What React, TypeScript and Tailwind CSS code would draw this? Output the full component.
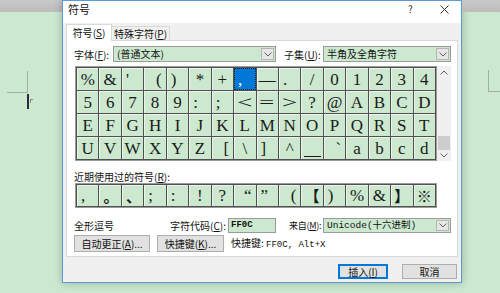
import { clsx } from "clsx";

type Glyph = {
  c: string;
  a?: "l" | "r";
  sel?: boolean;
  wide?: boolean;
  cjk?: boolean;
  under?: boolean;
};

const g = (c: string, opts: Partial<Glyph> = {}): Glyph => ({ c, ...opts });
const plain = (s: string) => [...s].map((c) => g(c));

const GRID: Glyph[][] = [
  [
    g("%"), g("&"), g("'", { a: "l" }), g("(", { a: "r" }), g(")", { a: "l" }), g("*"), g("+"),
    g(",", { a: "l", sel: true }), g("—"), g(".", { a: "l" }), g("/"), ...plain("01234"),
  ],
  [
    ...plain("56789"), g(":", { a: "l" }), g(";", { a: "l" }), g("<", { wide: true }), g("=", { wide: true }),
    g(">", { wide: true }), g("?"), g("@"), ...plain("ABCD"),
  ],
  plain("EFGHIJKLMNOPQRST"),
  [
    ...plain("UVWXYZ"), g("[", { a: "r" }), g("\\"), g("]", { a: "l" }), g("^"), g("_", { under: true }),
    g("`", { a: "r" }), ...plain("abcd"),
  ],
];

const RECENT: Glyph[] = [
  g(",", { a: "l" }), g("。", { a: "l", cjk: true }), g("、", { a: "l", cjk: true }), g(";", { a: "l" }),
  g(":", { a: "l" }), g("!"), g("?"), g("“", { a: "r" }), g("”", { a: "l" }), g("(", { a: "r" }),
  g("【", { cjk: true }), g(")", { a: "l" }), g("%"), g("&"), g("】", { cjk: true }), g("※", { cjk: true }),
];

function Cell({ glyph }: { glyph: Glyph }) {
  return (
    <div
      className={clsx(
        "flex items-center overflow-hidden leading-none",
        glyph.sel
          ? "bg-[#0078d7] text-white outline-1 -outline-offset-1 outline-dotted outline-[#222]"
          : "bg-[#cce8cf] text-[#1a1a1a] shadow-[inset_1px_1px_0_#e9f5ea]",
        glyph.a === "l" ? "justify-start pl-[4px]" : glyph.a === "r" ? "justify-end pr-[4px]" : "justify-center",
      )}
    >
      {glyph.under ? (
        <span className="mb-[2px] h-px w-[17px] self-end bg-[#1a1a1a]" />
      ) : (
        <span
          className={clsx(
            glyph.wide && "inline-block scale-x-[1.6]",
            glyph.cjk && "font-['Noto_Sans_CJK_SC',sans-serif] text-[15px] font-bold",
          )}
        >
          {glyph.c}
        </span>
      )}
    </div>
  );
}

function Chevron({ up = false }: { up?: boolean }) {
  return (
    <svg width="8" height="5" viewBox="0 0 8 5" className={clsx(up && "rotate-180")}>
      <path d="M0.5 0.5 L4 4 L7.5 0.5" fill="none" stroke="#606060" strokeWidth="1" />
    </svg>
  );
}

function Select({ text, width, mono = false }: { text: string; width: string; mono?: boolean }) {
  return (
    <div className={clsx("flex h-full shrink-0 items-stretch border border-[#9b9b9b] bg-[#cce8cf]", width)}>
      <span
        className={clsx(
          "flex flex-1 items-center pl-[3px] leading-none",
          mono ? "font-['Liberation_Mono','Noto_Sans_CJK_SC',monospace] text-[9.5px]" : "text-[10px]",
        )}
      >
        {text}
      </span>
      <span className="m-px flex w-[13px] items-center justify-center border border-[#b5b5b5] bg-[#e6e6e6]">
        <Chevron />
      </span>
    </div>
  );
}

function Acc({ t, k, tail = ":" }: { t: string; k: string; tail?: string }) {
  return (
    <span className="whitespace-nowrap leading-none">
      {t}(<span className="underline">{k}</span>){tail}
    </span>
  );
}

function Button({ children, width, primary = false }: { children: React.ReactNode; width: string; primary?: boolean }) {
  return (
    <div
      className={clsx(
        "flex h-full items-center justify-center bg-[#e1e1e1] text-[10px] leading-none",
        width,
        primary ? "border border-[#0078d7] shadow-[inset_0_0_0_1px_#0078d7]" : "border border-[#adadad]",
      )}
    >
      {children}
    </div>
  );
}

function Dialog() {
  return (
    <div className="flex h-[283px] w-[400px] shrink-0 flex-col border border-[#5b9bd5] bg-[#f0f0f0] shadow-[0_0_8px_rgba(0,0,0,0.25)]">
      <div className="flex h-[22px] items-start bg-white pt-[2px] text-[11px] leading-[12px]">
        <span className="flex-1 pl-[5px]">符号</span>
        <span className="mt-[1px] w-[6px] text-[10px] leading-[9px] text-[#333]">?</span>
        <svg width="9" height="9" viewBox="0 0 9 9" className="mt-[2px] mr-[12px] ml-[26px]">
          <path d="M0.5 0.5 L8.5 8.5 M8.5 0.5 L0.5 8.5" stroke="#333" strokeWidth="1" />
        </svg>
      </div>

      <div className="flex h-[17px] items-end pl-[3px] text-[10px]">
        <div className="relative z-10 -mb-px flex h-[17px] w-[46px] items-center justify-center border border-b-0 border-[#d9d9d9] bg-white">
          <Acc t="符号" k="S" tail="" />
        </div>
        <div className="flex h-[14px] w-[58px] items-center justify-center border border-b-0 border-l-0 border-[#d9d9d9] bg-[#f0f0f0]">
          <Acc t="特殊字符" k="P" tail="" />
        </div>
      </div>

      <div className="ml-[3px] flex h-[217px] w-[392px] flex-col border border-[#d9d9d9] bg-white pl-[7px] text-[10px]">
        <div className="mt-[5px] flex h-[16px] items-center">
          <span className="w-[39px]">
            <Acc t="字体" k="F" />
          </span>
          <Select text="(普通文本)" width="w-[163px]" />
          <span className="ml-[8px] w-[39px]">
            <Acc t="子集" k="U" />
          </span>
          <Select text="半角及全角字符" width="w-[128px]" />
        </div>

        <div className="mt-[4px] flex pl-px">
          <div className="border border-[#9a9a9a]">
            <div className="grid h-[93px] w-[360px] grid-cols-16 grid-rows-4 gap-px bg-[#505050] p-px font-['Liberation_Serif','DejaVu_Serif',serif] text-[17px]">
              {GRID.flat().map((glyph, i) => (
                <Cell key={i} glyph={glyph} />
              ))}
            </div>
          </div>
          <div className="flex h-[95px] w-[14px] flex-col items-center bg-[#f0f0f0]">
            <div className="flex h-[12px] items-center">
              <Chevron up />
            </div>
            <div className="flex-1" />
            <div className="h-[14px] w-[12px] bg-[#cdcdcd]" />
            <div className="flex h-[11px] items-center">
              <Chevron />
            </div>
          </div>
        </div>

        <div className="mt-[10px] flex h-[12px] items-center">
          <Acc t="近期使用过的符号" k="R" />
        </div>

        <div className="flex pl-px">
          <div className="border border-[#9a9a9a]">
            <div className="grid h-[23px] w-[360px] grid-cols-16 gap-px bg-[#505050] p-px font-['Liberation_Serif','DejaVu_Serif',serif] text-[17px]">
              {RECENT.map((glyph, i) => (
                <Cell key={i} glyph={glyph} />
              ))}
            </div>
          </div>
        </div>

        <div className="mt-[10px] flex h-[15px] items-center">
          <span className="w-[96px]">全形逗号</span>
          <span className="w-[58px]">
            <Acc t="字符代码" k="C" />
          </span>
          <div className="flex h-full w-[48px] items-center border border-[#9b9b9b] bg-[#cce8cf] pl-[2px] font-['Liberation_Mono',monospace] text-[9px] font-bold leading-none">
            FF0C
          </div>
          <span className="ml-[13px] w-[34px] shrink-0 text-[9px] tracking-[-0.3px]">
            <Acc t="来自" k="M" />
          </span>
          <Select text="Unicode(十六进制)" width="w-[128px]" mono />
        </div>

        <div className="mt-[2px] flex h-[17px] items-center">
          <Button width="w-[76px]">
            <Acc t="自动更正" k="A" tail="..." />
          </Button>
          <div className="ml-[7px] h-full">
            <Button width="w-[67px]">
              <Acc t="快捷键" k="K" tail="..." />
            </Button>
          </div>
          <span className="ml-[7px] whitespace-nowrap leading-none">
            快捷键:{" "}
            <span className="font-['Liberation_Mono',monospace] text-[9px]">FF0C, Alt+X</span>
          </span>
        </div>
      </div>

      <div className="mt-[7px] flex h-[15px] justify-end gap-[14px] pr-[4px]">
        <Button width="w-[50px]" primary>
          <Acc t="插入" k="I" tail="" />
        </Button>
        <Button width="w-[55px]">取消</Button>
      </div>
    </div>
  );
}

export default function App() {
  return (
    <div className="flex h-[293px] w-[500px] overflow-hidden bg-[#cce8cf] font-['Noto_Sans_CJK_SC','Microsoft_YaHei',sans-serif] text-[#111]">
      <div className="flex w-[62px] shrink-0 flex-col">
        <div className="h-[12px] bg-gradient-to-b from-[#c9c9c9] to-[#bcbcbc]" />
        <div className="mt-[59px] ml-[7px] h-[22px] w-[21px] border-r border-b border-[#9fb0a1]" />
        <div className="mt-[1px] ml-[27px] flex items-start gap-[1px]">
          <div className="h-[15px] w-[2px] bg-[#2e2a3d]" />
          <div className="mt-[5px] h-[4px] w-[3px] border-t border-l border-[#8b8b8b]" />
        </div>
      </div>

      <Dialog />

      <div className="flex w-[38px] shrink-0 flex-col">
        <div className="h-[12px] bg-gradient-to-b from-[#c9c9c9] to-[#bcbcbc]" />
        <div className="mt-[58px] ml-[26px] h-[22px] w-[12px] border-b border-l border-[#9fb0a1]" />
      </div>
    </div>
  );
}
